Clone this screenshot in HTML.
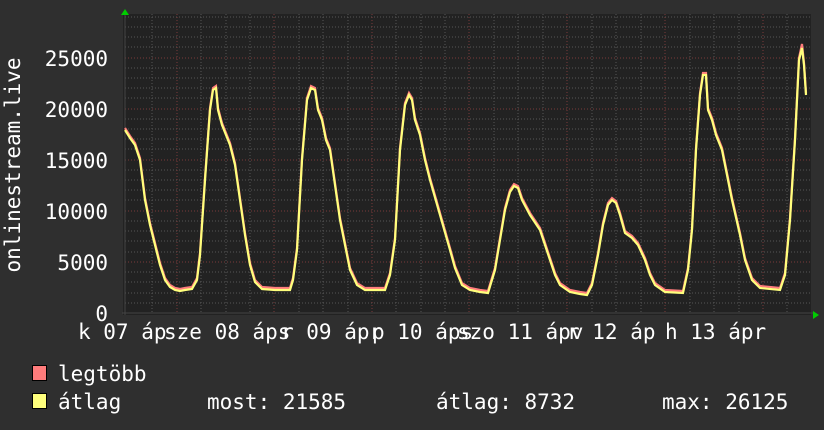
<!DOCTYPE html>
<html><head><meta charset="utf-8"><style>
html,body{margin:0;padding:0;background:#2f2f2f;}
svg{display:block}
text{font-family:"DejaVu Sans Mono","Liberation Mono",monospace;fill:#fff;font-size:21px}
</style></head><body>
<svg width="824" height="430" viewBox="0 0 824 430" xmlns="http://www.w3.org/2000/svg">
<rect width="824" height="430" fill="#2f2f2f"/>
<rect x="123" y="14" width="688" height="301" fill="#222"/>
<g stroke="#555" stroke-width="1" stroke-dasharray="1,2">
<line x1="125" x2="810" y1="303" y2="303"/><line x1="125" x2="810" y1="293" y2="293"/><line x1="125" x2="810" y1="282" y2="282"/><line x1="125" x2="810" y1="272" y2="272"/>
<line x1="125" x2="810" y1="252" y2="252"/><line x1="125" x2="810" y1="241" y2="241"/><line x1="125" x2="810" y1="231" y2="231"/><line x1="125" x2="810" y1="221" y2="221"/>
<line x1="125" x2="810" y1="200" y2="200"/><line x1="125" x2="810" y1="190" y2="190"/><line x1="125" x2="810" y1="180" y2="180"/><line x1="125" x2="810" y1="170" y2="170"/>
<line x1="125" x2="810" y1="149" y2="149"/><line x1="125" x2="810" y1="139" y2="139"/><line x1="125" x2="810" y1="129" y2="129"/><line x1="125" x2="810" y1="119" y2="119"/>
<line x1="125" x2="810" y1="98" y2="98"/><line x1="125" x2="810" y1="88" y2="88"/><line x1="125" x2="810" y1="78" y2="78"/><line x1="125" x2="810" y1="68" y2="68"/>
<line x1="125" x2="810" y1="47" y2="47"/><line x1="125" x2="810" y1="37" y2="37"/><line x1="125" x2="810" y1="27" y2="27"/><line x1="125" x2="810" y1="17" y2="17"/>
<line x1="152" x2="152" y1="14" y2="313"/><line x1="201" x2="201" y1="14" y2="313"/><line x1="226" x2="226" y1="14" y2="313"/><line x1="250" x2="250" y1="14" y2="313"/>
<line x1="299" x2="299" y1="14" y2="313"/><line x1="323" x2="323" y1="14" y2="313"/><line x1="348" x2="348" y1="14" y2="313"/>
<line x1="396" x2="396" y1="14" y2="313"/><line x1="421" x2="421" y1="14" y2="313"/><line x1="445" x2="445" y1="14" y2="313"/>
<line x1="494" x2="494" y1="14" y2="313"/><line x1="518" x2="518" y1="14" y2="313"/><line x1="543" x2="543" y1="14" y2="313"/>
<line x1="592" x2="592" y1="14" y2="313"/><line x1="616" x2="616" y1="14" y2="313"/><line x1="641" x2="641" y1="14" y2="313"/>
<line x1="690" x2="690" y1="14" y2="313"/><line x1="714" x2="714" y1="14" y2="313"/><line x1="739" x2="739" y1="14" y2="313"/><line x1="787" x2="787" y1="14" y2="313"/>
</g>
<g stroke="#7a3a3a" stroke-width="1" stroke-dasharray="1,2">
<line x1="125" x2="810" y1="58" y2="58"/><line x1="125" x2="810" y1="109" y2="109"/><line x1="125" x2="810" y1="160" y2="160"/><line x1="125" x2="810" y1="211" y2="211"/><line x1="125" x2="810" y1="262" y2="262"/>
<line x1="177" x2="177" y1="14" y2="313"/><line x1="274" x2="274" y1="14" y2="313"/><line x1="372" x2="372" y1="14" y2="313"/><line x1="469" x2="469" y1="14" y2="313"/><line x1="567" x2="567" y1="14" y2="313"/><line x1="665" x2="665" y1="14" y2="313"/><line x1="763" x2="763" y1="14" y2="313"/>
</g>
<line x1="125" x2="125" y1="12" y2="315" stroke="#444"/>
<line x1="122" x2="814" y1="313" y2="313" stroke="#444"/>
<polygon points="121,15 125,9 129,15" fill="#0c0"/>
<polygon points="813,311 819,315 813,319" fill="#0c0"/>
<polyline fill="none" stroke="#ff7c7c" stroke-width="2.2" transform="translate(0,-2)" points="125,130 130,138 135,145 140,160 145,200 150,225 155,245 160,265 165,280 170,287 175,290 180,291 185,290 192,289 197,280 200,255 205,180 210,110 213,90 216,88 218,110 222,125 226,135 230,145 235,165 240,200 245,235 250,265 255,282 262,289 275,290 290,290 293,280 297,250 302,160 307,100 311,88 315,90 318,110 322,120 326,140 330,150 335,185 340,220 345,245 350,270 357,285 365,290 385,290 390,275 395,240 400,150 405,105 409,95 412,100 415,120 420,135 425,160 430,180 440,215 450,250 455,268 462,285 470,290 480,292 488,293 495,270 500,240 505,210 510,192 514,186 518,188 522,200 530,215 540,230 545,245 550,260 555,275 560,285 570,292 580,294 587,295 592,285 598,255 603,225 608,205 612,200 616,203 620,215 625,233 632,238 638,245 645,260 650,275 655,285 665,292 683,293 688,270 692,230 696,150 700,95 703,75 706,75 708,110 712,120 716,135 722,150 727,175 732,200 740,235 745,260 752,280 760,288 780,290 785,275 790,220 795,140 799,60 802,46 804,65 806,95"/>
<polyline fill="none" stroke="#ffff7c" stroke-width="2.2" points="125,130 130,138 135,145 140,160 145,200 150,225 155,245 160,265 165,280 170,287 175,290 180,291 185,290 192,289 197,280 200,255 205,180 210,110 213,90 216,88 218,110 222,125 226,135 230,145 235,165 240,200 245,235 250,265 255,282 262,289 275,290 290,290 293,280 297,250 302,160 307,100 311,88 315,90 318,110 322,120 326,140 330,150 335,185 340,220 345,245 350,270 357,285 365,290 385,290 390,275 395,240 400,150 405,105 409,95 412,100 415,120 420,135 425,160 430,180 440,215 450,250 455,268 462,285 470,290 480,292 488,293 495,270 500,240 505,210 510,192 514,186 518,188 522,200 530,215 540,230 545,245 550,260 555,275 560,285 570,292 580,294 587,295 592,285 598,255 603,225 608,205 612,200 616,203 620,215 625,233 632,238 638,245 645,260 650,275 655,285 665,292 683,293 688,270 692,230 696,150 700,95 703,75 706,75 708,110 712,120 716,135 722,150 727,175 732,200 740,235 745,260 752,280 760,288 780,290 785,275 790,220 795,140 799,60 802,48 804,65 806,95"/>
<g text-anchor="end">
<text x="108" y="66">25000</text><text x="108" y="117">20000</text><text x="108" y="168">15000</text><text x="108" y="219">10000</text><text x="108" y="270">5000</text><text x="108" y="321">0</text>
</g>
<text transform="translate(20,165) rotate(-90)" text-anchor="middle">onlinestream.live</text>
<text x="78" y="339">k 07 áp</text>
<text x="164" y="339">sze 08 áps</text>
<text x="281" y="339">r 09 ápr</text>
<text x="372" y="339">p 10 áps</text>
<text x="457" y="339">szo 11 ápv</text>
<text x="567" y="339">r 12 áp</text>
<text x="665" y="339">h 13 ápr</text>
<rect x="32.5" y="365.5" width="14" height="15" fill="#ff7c7c" stroke="#000"/>
<rect x="32.5" y="393.5" width="14" height="15" fill="#ffff7c" stroke="#000"/>
<text x="58" y="381">legtöbb</text>
<text x="58" y="409">átlag</text>
<text x="207" y="409">most: 21585</text>
<text x="436" y="409">átlag: 8732</text>
<text x="662" y="409">max: 26125</text>
</svg>
</body></html>
